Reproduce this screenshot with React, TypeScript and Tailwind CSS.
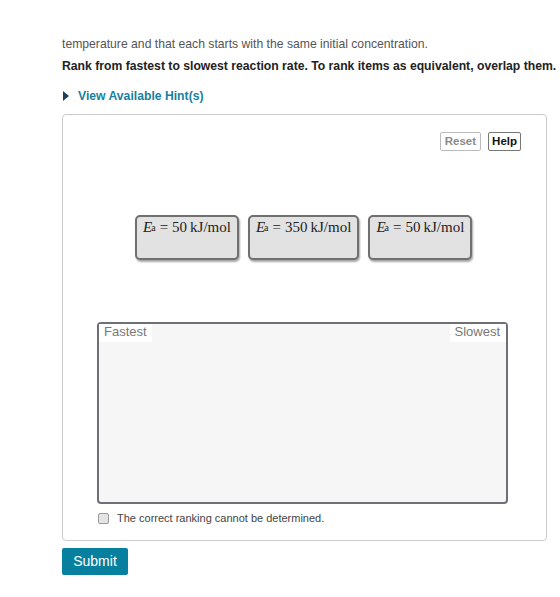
import React from 'react';

type Item = { id: string; value: string };

const items: Item[] = [
  { id: 'a', value: '50' },
  { id: 'b', value: '350' },
  { id: 'c', value: '50' },
];

function EnergyCard({ value }: { value: string }) {
  return (
    <div className="h-[45px] rounded-[5px] border-2 border-[#707070] bg-[#e2e2e2] px-[6px] pt-[1px] shadow-[1px_2px_2px_rgba(0,0,0,0.35)]">
      <span className="whitespace-nowrap text-[15px] leading-[18px] text-[#222] [font-family:'Liberation_Serif','DejaVu_Serif',serif]">
        <i>E</i>
        <sub className="relative -top-[1px] ml-[-1px] text-[10px]">a</sub>
        <span className="mx-[4px]">=</span>
        {value}
        <span className="ml-[3px]">kJ/mol</span>
      </span>
    </div>
  );
}

export default function App() {
  return (
    <div className="min-h-[597px] w-[560px] bg-white pl-[62px] pt-[36px] text-[12.2px] [font-family:'Liberation_Sans',Arial,sans-serif]">
      <p className="leading-[16px] text-[#555]">
        temperature and that each starts with the same initial concentration.
      </p>
      <p className="mt-[6px] whitespace-nowrap font-bold leading-[16px] text-[#222]">
        Rank from fastest to slowest reaction rate. To rank items as equivalent, overlap them.
      </p>
      <div className="mt-[14px] flex items-center gap-[8px] leading-[16px]">
        <svg width="7" height="10" viewBox="0 0 7 10" className="ml-[1px]">
          <path d="M0 0 L6 5 L0 10 Z" fill="#1c3f5a" />
        </svg>
        <span className="font-bold text-[#1a7fa0]">View Available Hint(s)</span>
      </div>

      <div className="mt-[10px] h-[427px] w-[485px] rounded-[4px] border border-[#cccccc] bg-white">
        <div className="flex justify-end gap-[7px] pr-[25px] pt-[17px]">
          <button className="h-[19px] rounded-[2px] border border-[#bbbbbb] bg-white px-[4px] text-[11.5px] font-bold leading-[15px] text-[#8a8a8a]">
            Reset
          </button>
          <button className="h-[19px] rounded-[2px] border border-[#777] bg-white px-[3px] text-[11.5px] font-bold leading-[15px] text-[#111]">
            Help
          </button>
        </div>

        <div className="ml-[72px] mt-[64px] flex gap-[9px]">
          {items.map((it) => (
            <EnergyCard key={it.id} value={it.value} />
          ))}
        </div>

        <div className="ml-[34px] mt-[62px] h-[182px] w-[411px] rounded-[4px] border-2 border-[#6f6f78] bg-[#f6f6f6]">
          <div className="flex justify-between text-[13px] leading-[16px] text-[#777]">
            <span className="bg-white pb-[2px] pl-[5px] pr-[5px]">Fastest</span>
            <span className="bg-white pb-[2px] pl-[4px] pr-[6px]">Slowest</span>
          </div>
        </div>

        <label className="ml-[35px] mt-[6px] flex items-center gap-[8px] text-[11px] text-[#444]">
          <span className="h-[11px] w-[11px] rounded-[2px] border border-[#9a9a9a] bg-[#e4e4e4]" />
          The correct ranking cannot be determined.
        </label>
      </div>

      <button className="mt-[7px] h-[27px] w-[66px] rounded-[2px] bg-[#077f9e] text-[14px] leading-[27px] text-white">
        Submit
      </button>
    </div>
  );
}
